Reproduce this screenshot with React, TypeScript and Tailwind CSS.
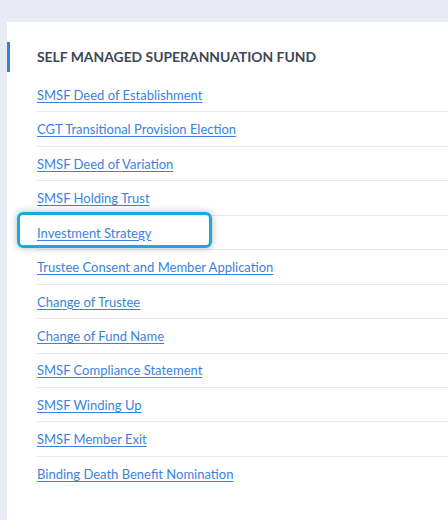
import React from "react";

const links = [
  "SMSF Deed of Establishment",
  "CGT Transitional Provision Election",
  "SMSF Deed of Variation",
  "SMSF Holding Trust",
  "Investment Strategy",
  "Trustee Consent and Member Application",
  "Change of Trustee",
  "Change of Fund Name",
  "SMSF Compliance Statement",
  "SMSF Winding Up",
  "SMSF Member Exit",
  "Binding Death Benefit Nomination",
];

export default function App() {
  return (
    <div
      className="relative h-[520px] w-[448px] overflow-hidden bg-[#e8ebf4] pl-[7px] pt-[22px]"
      style={{ fontFamily: "Lato, 'Open Sans', sans-serif" }}
    >
      <div className="h-full bg-white pt-[20px]">
        <div className="flex h-[30px] items-center border-l-[3px] border-[#3a7fd5] pl-[27px]">
          <h2 className="text-[13.9px] font-bold text-[#3d4756]">
            SELF MANAGED SUPERANNUATION FUND
          </h2>
        </div>
        <ul className="mt-[6px] pl-[30px]">
          {links.map((l, i) => (
            <li
              key={l}
              className={`box-border flex h-[34.45px] items-center pt-[2px] ${
                i < links.length - 1 ? "border-b border-[#e6e8ee]" : ""
              }`}
            >
              <a
                href="#"
                className="text-[13px] text-[#3b82e0] underline decoration-1 underline-offset-2"
              >
                {l}
              </a>
            </li>
          ))}
        </ul>
      </div>
      <div className="pointer-events-none absolute left-[17px] top-[212px] h-[36px] w-[195px] rounded-[6px] border-[3px] border-[#19a9e1] shadow-[0_0_6px_1px_rgba(0,0,0,0.22)]" />
    </div>
  );
}
